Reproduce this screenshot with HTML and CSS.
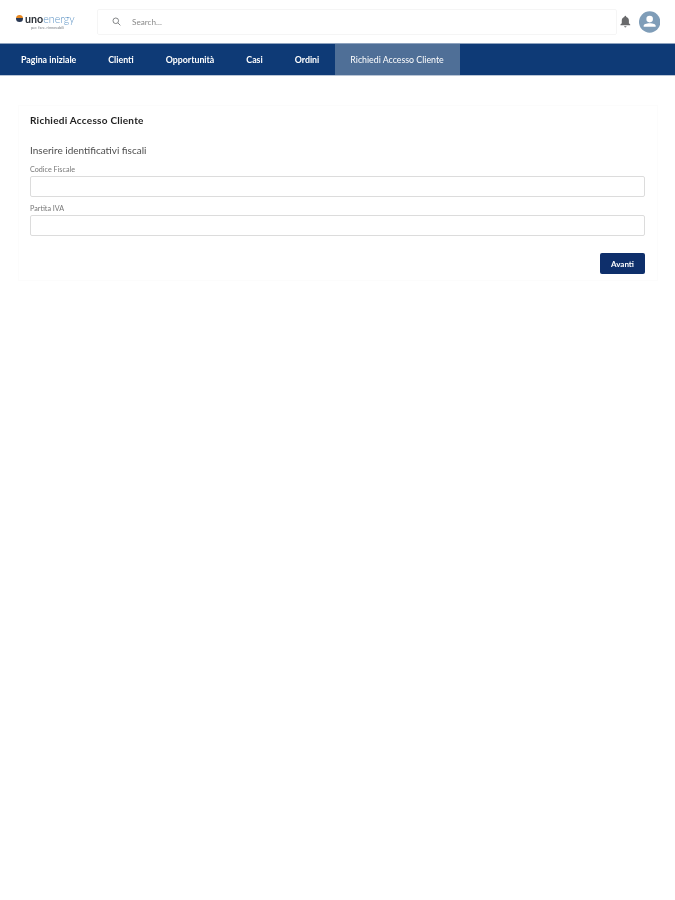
FILE: index.html
```html
<!doctype html>
<html>
  <head>
    <title>Richiedi Accesso Cliente</title>
    <meta charset="UTF-8" />
    <link rel="stylesheet" href="styles.css">
  </head>

  <body>
    <header class="topbar">
      <div class="logo">
        <div class="logo-main">
          <span class="logo-dot"></span>
          <span class="logo-uno">uno</span><span class="logo-energy">energy</span>
        </div>
        <div class="logo-sub">per. fare. rinnovabili</div>
      </div>

      <div class="search">
        <svg class="search-icon" xmlns="http://www.w3.org/2000/svg" width="9" height="9" viewBox="0 0 10 10">
          <circle cx="4.2" cy="4.2" r="3.1" />
          <path d="M6.5 6.5L9.3 9.3" />
        </svg>
        <span class="search-text">Search...</span>
      </div>

      <svg class="bell" xmlns="http://www.w3.org/2000/svg" width="11" height="13" viewBox="0 0 12 14">
        <path d="M6 0.5c.6 0 1 .4 1 1v.4c1.900.5 3 2.100 3 4v3l1.500 1.500v.8h-11v-.8l1.500-1.500v-3c0-1.900 1.100-3.500 3-4v-.4c0-.6.4-1 1-1z" />
        <path d="M4.700 12.400h2.600c0 .7-.6 1.300-1.300 1.300s-1.300-.6-1.300-1.300z" />
      </svg>

      <svg class="avatar" xmlns="http://www.w3.org/2000/svg" width="22" height="22" viewBox="0 0 22 22">
        <circle class="avatar-bg" cx="11" cy="11" r="11" />
        <circle class="avatar-fg" cx="11" cy="8" r="3.400" />
        <path class="avatar-fg" d="M4.800 16v-.9c0-1.700 2.700-2.700 6.200-2.700s6.200 1 6.200 2.700v.9z" />
      </svg>
    </header>

    <nav class="navbar">
      <a class="nav-item">Pagina iniziale</a>
      <a class="nav-item">Clienti</a>
      <a class="nav-item">Opportunità</a>
      <a class="nav-item">Casi</a>
      <a class="nav-item">Ordini</a>
      <a class="nav-item active">Richiedi Accesso Cliente</a>
    </nav>

    <main class="content">
      <section class="card">
        <h1 class="card-title">Richiedi Accesso Cliente</h1>
        <h2 class="card-subtitle">Inserire identificativi fiscali</h2>

        <div class="field">
          <label class="field-label" for="codice">Codice Fiscale</label>
          <input id="codice" class="field-input" type="text" />
        </div>
        <div class="field">
          <label class="field-label" for="iva">Partita IVA</label>
          <input id="iva" class="field-input" type="text" />
        </div>

        <div class="actions">
          <button class="button">Avanti</button>
        </div>
      </section>
    </main>
  </body>
</html>
```

FILE: styles.css
```css
html {
  margin: 0;
  padding: 0;
}
body {
  margin: 0;
  min-height: 900px;
  font-family: Lato, 'Noto Sans', sans-serif;
  color: #1f1f1f;
  background: #ffffff;
}

/* the reference is a soft, upscaled capture */
.topbar,
.navbar,
.content {
  filter: blur(0.6px);
}

/* top bar */
.topbar {
  display: flex;
  align-items: center;
  height: 43px;
  padding: 0 15px 0 16px;
  box-sizing: border-box;
}
.logo {
  width: 81px;
  flex: none;
}
.logo-main {
  display: flex;
  align-items: center;
  font-size: 10.700px;
  line-height: 10px;
}
.logo-dot {
  width: 7px;
  height: 7px;
  margin-right: 2px;
  border-radius: 50%;
  background: linear-gradient(180deg, #e8871e 50%, #2b3a55 50%);
}
.logo-uno {
  font-weight: 700;
  color: #2b3037;
}
.logo-energy {
  font-weight: 300;
  color: #5d93c4;
}
.logo-sub {
  margin-top: 1px;
  padding-left: 15px;
  font-size: 3.800px;
  line-height: 5px;
  color: #777c82;
}
.search {
  display: flex;
  align-items: center;
  width: 520px;
  height: 26px;
  flex: none;
  box-sizing: border-box;
  padding-left: 14px;
  border: 1px solid #f5f5f5;
  border-radius: 2px;
}
.search-icon {
  fill: none;
  stroke: #77797c;
  stroke-width: 1;
}
.search-text {
  margin-left: 11px;
  font-size: 8.200px;
  color: #8a8a8a;
}
.bell {
  margin-left: 3px;
  fill: #68696b;
}
.avatar {
  margin-left: 8px;
}
.avatar-bg {
  fill: #7f9db8;
}
.avatar-fg {
  fill: #ffffff;
}

/* nav */
.navbar {
  display: flex;
  height: 33px;
  background: #0e3a76;
  border-top: 1px solid #8ea3bf;
  border-bottom: 1px solid #b9c5d6;
  box-sizing: border-box;
}
.nav-item {
  display: flex;
  align-items: center;
  padding: 0 16px;
  font-size: 8.800px;
  font-weight: 700;
  color: #ffffff;
}
.nav-item:first-child {
  padding-left: 21px;
}
.nav-item.active {
  width: 125px;
  padding: 0 0 0 15px;
  box-sizing: border-box;
  background: #4f6f97;
  font-weight: 400;
}

/* card */
.content {
  padding: 29px 17px 0 18px;
}
.card {
  height: 176px;
  padding: 8px 12px 7px 11px;
  box-sizing: border-box;
  border: 1px solid #fcfcfc;
}
.card-title {
  margin: 0;
  font-size: 10px;
  line-height: 12px;
  font-weight: 700;
  letter-spacing: 0.25px;
}
.card-subtitle {
  margin: 17px 0 0 0;
  font-size: 10px;
  line-height: 14px;
  font-weight: 400;
  color: #4d4d4d;
}
.field {
  margin-top: 8px;
}
.field + .field {
  margin-top: 7px;
}
.field-label {
  display: block;
  font-size: 7.200px;
  line-height: 9px;
  color: #777777;
}
.field-input {
  display: block;
  width: 100%;
  height: 21px;
  margin-top: 2px;
  box-sizing: border-box;
  border: 1px solid #dcdcdc;
  border-radius: 2px;
  background: #ffffff;
}
.actions {
  display: flex;
  justify-content: flex-end;
  margin-top: 17px;
}
.button {
  width: 45px;
  height: 21px;
  padding: 0;
  border: 0;
  border-radius: 2px;
  background: #0e2f6b;
  color: #ffffff;
  font-family: inherit;
  font-size: 8px;
  font-weight: 700;
}
```
